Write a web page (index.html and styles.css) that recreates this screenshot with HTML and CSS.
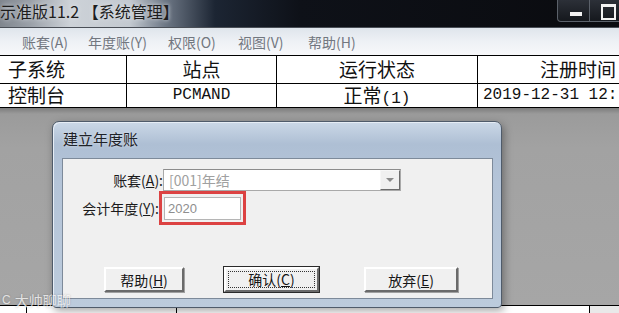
FILE: index.html
```html
<!DOCTYPE html>
<html lang="zh-CN">
  <head>
    <meta charset="UTF-8" />
    <title>系统管理 - 建立年度账</title>
    <link rel="stylesheet" href="styles.css">
  </head>
  <body>
    <!-- Main window title -->
    <div class="titlebar">
      <div class="title">示准版11.2 【系统管理】</div>
      <div class="winbtns">
        <span class="wb min"></span>
        <span class="wb max"></span>
      </div>
    </div>

    <!-- Menu -->
    <div class="menubar">
      <span class="m1">账套(A)</span>
      <span class="m2">年度账(Y)</span>
      <span class="m3">权限(O)</span>
      <span class="m4">视图(V)</span>
      <span class="m5">帮助(H)</span>
    </div>

    <!-- Site list -->
    <div class="grid">
      <div class="row head">
        <div class="cell c1">子系统</div>
        <div class="cell c2">站点</div>
        <div class="cell c3">运行状态</div>
        <div class="cell c4">注册时间</div>
      </div>
      <div class="row">
        <div class="cell c1">控制台</div>
        <div class="cell c2 mono">PCMAND</div>
        <div class="cell c3">正常<span class="mono">(1)</span></div>
        <div class="cell c4 mono left">2019-12-31 12:</div>
      </div>
    </div>

    <!-- Desktop area under the dialog -->
    <div class="desk">
      <div class="gap"></div>
      <div class="lastrow">
        <div class="lc a"></div>
        <div class="lc b"></div>
        <div class="lc c"></div>
        <div class="lc d"></div>
      </div>

      <!-- Dialog window -->
      <div class="dialog">
        <div class="dlg-title">建立年度账</div>
        <div class="dlg-body">
          <div class="field">
            <label>账套(<u>A</u>):</label>
            <div class="combo">
              <span class="combo-text">[001]年结</span>
              <span class="combo-btn"><i></i></span>
            </div>
          </div>
          <div class="field">
            <label class="narrow">会计年度(<u>Y</u>):</label>
            <div class="hl">
              <div class="input">2020</div>
            </div>
          </div>
          <div class="buttons">
            <button class="btn b1">帮助(<u>H</u>)</button>
            <button class="btn b2 default"><span class="focus">确认(<u>C</u>)</span></button>
            <button class="btn b3">放弃(<u>E</u>)</button>
          </div>
        </div>
      </div>

      <div class="watermark"><span class="wm-icon">C</span>大帅聊聊</div>
    </div>
  </body>
</html>
```

FILE: styles.css
```css
* {
  margin: 0;
  padding: 0;
  box-sizing: border-box;
}

body {
  width: 619px;
  height: 313px;
  overflow: hidden;
  font-family: "Noto Sans CJK SC", "Liberation Sans", sans-serif;
  background-color: #a3a3a3;
  color: #111;
}

/* Title bar */
.titlebar {
  height: 27px;
  display: flex;
  justify-content: space-between;
  background: linear-gradient(90deg, #80868e 0, #9aa0a8 30px, #cdd2d8 70px, #c3c9d0 130px, #6e7886 165px, #1c2533 215px, #0e1118 300px, #0a0b0f 100%);
}

.title {
  font-size: 16px;
  line-height: 23px;
  color: #1d1d1d;
  text-shadow: 0 0 4px #e8ebef;
  white-space: nowrap;
}

.winbtns {
  display: flex;
  align-self: flex-start;
  height: 22px;
  border: 1px solid #5b616a;
  border-top: none;
  border-radius: 0 0 0 4px;
  margin-right: -4px;
  background: linear-gradient(#2c3038, #15181d);
}

.wb {
  width: 32px;
  position: relative;
  border-right: 1px solid #5b616a;
}

.wb.min::after {
  content: "";
  position: absolute;
  left: 12px;
  top: 12px;
  width: 12px;
  height: 4px;
  background: #f2f2f2;
}

.wb.max::after {
  content: "";
  position: absolute;
  left: 11px;
  top: 4px;
  width: 11px;
  height: 11px;
  border: 2px solid #f2f2f2;
  border-top-width: 3px;
}

/* Menu bar */
.menubar {
  height: 28px;
  display: flex;
  align-items: center;
  padding-left: 22px;
  font-size: 14px;
  color: #72777f;
  background: linear-gradient(#dfe5ec, #eef1f5 50%, #f7f8fa);
  border-top: 1px solid #4a4f57;
}

.menubar span { display: block; }
.m1 { width: 66px; }
.m2 { width: 80px; }
.m3 { width: 70px; }
.m4 { width: 70px; }

/* Site table */
.grid {
  background: #fff;
  border-top: 1px solid #000;
  white-space: nowrap;
}

.row {
  display: flex;
  height: 24px;
  border-bottom: 1px solid #000;
}

.row.head { height: 28px; }

.cell {
  font-size: 19px;
  line-height: 22px;
  text-align: center;
  border-right: 1px solid #000;
  flex-shrink: 0;
}

.row.head .cell { line-height: 26px; }

.c1 { width: 127px; text-align: left; padding-left: 8px; }
.c2 { width: 150px; }
.c3 { width: 201px; }
.c4 { width: 200px; border-right: none; }
.left { text-align: left; padding-left: 5px; }

.mono {
  font-family: "Liberation Mono", monospace;
  font-size: 16px;
}

/* Grey area behind the dialog */
.desk {
  position: relative;
  height: 206px;
  display: flex;
  flex-direction: column;
}

.gap {
  flex: 1;
  background: linear-gradient(#7c7c7c, #9b9b9b 6px, #a2a2a2 40px, #a6a6a6);
}

.lastrow {
  height: 9px;
  display: flex;
  background: #fff;
  border-top: 1px solid #000;
}

.lc { border-right: 1px solid #000; }
.lc.a { width: 27px; }
.lc.b { width: 150px; }
.lc.c { width: 413px; }
.lc.d { flex: 1; border-right: none; background: #e9e9e9; }

/* Dialog */
.dialog {
  position: absolute;
  left: 52px;
  top: 13px;
  width: 450px;
  height: 187px;
  display: flex;
  flex-direction: column;
  border: 1px solid #4f5b6a;
  border-radius: 7px 7px 4px 4px;
  background: linear-gradient(#cbd8e7, #aebfd4 22px, #b4c4d8 60px, #bccbdc);
  box-shadow: 2px 3px 8px rgba(0, 0, 0, 0.35), inset 1px 1px 0 #e6edf5;
}

.dlg-title {
  height: 36px;
  padding: 7px 0 0 10px;
  font-size: 15px;
  line-height: 20px;
  color: #1e2228;
  text-shadow: 0 0 3px #dfe7f0;
}

.dlg-body {
  height: 141px;
  margin: 0 8px 0 9px;
  background: #f0f0f0;
  border: 1px solid #7d8a9a;
  padding-top: 10px;
  font-size: 14px;
}

.field {
  display: flex;
  align-items: center;
}

.field label {
  width: 100px;
  text-align: right;
  color: #1a1a1a;
  white-space: nowrap;
}

.field label.narrow { width: 96px; }

.combo {
  width: 238px;
  height: 22px;
  display: flex;
  background: #fff;
  border: 1px solid #a9a9a9;
  border-top-color: #8c8c8c;
}

.combo-text {
  flex: 1;
  padding-left: 5px;
  line-height: 20px;
  color: #a0a0a0;
  font-size: 14px;
}

.combo-btn {
  width: 20px;
  display: flex;
  align-items: center;
  justify-content: center;
  background: #f0f0f0;
  border: 1px solid #f7f7f7;
  border-right-color: #6b6b6b;
  border-bottom-color: #6b6b6b;
}

.combo-btn i {
  width: 0;
  height: 0;
  border-left: 4px solid transparent;
  border-right: 4px solid transparent;
  border-top: 4px solid #8a8a8a;
}

.hl {
  border: 3px solid #dc4242;
  padding: 3px 2px 2px 2px;
}

.input {
  width: 77px;
  height: 23px;
  background: #fff;
  border: 1px solid #b5b5b5;
  padding-left: 3px;
  line-height: 21px;
  font-size: 13px;
  font-family: "Liberation Sans", sans-serif;
  color: #8e8e8e;
}

/* Dialog buttons */
.buttons {
  display: flex;
  margin-top: 42px;
  padding-left: 41px;
}

.btn {
  height: 25px;
  font-family: "Noto Sans CJK SC", sans-serif;
  font-size: 14px;
  color: #151515;
  background: #f0f0f0;
  border: 2px solid;
  border-color: #ffffff #6a6a6a #6a6a6a #ffffff;
  box-shadow: 1px 1px 0 #a0a0a0;
}

.b1 { width: 80px; }
.b2 { width: 95px; margin-left: 40px; }
.b3 { width: 94px; margin-left: 45px; }

.btn.default {
  outline: 1px solid #2a2a2a;
  padding: 2px;
}

.focus {
  display: block;
  height: 100%;
  line-height: 15px;
  border: 1px dotted #333;
}

/* Watermark */
.watermark {
  position: absolute;
  left: 2px;
  top: 184px;
  font-size: 14px;
  line-height: 16px;
  color: rgba(255, 255, 255, 0.75);
  text-shadow: 0 0 2px rgba(0, 0, 0, 0.25);
  display: flex;
  align-items: center;
  gap: 4px;
}

.wm-icon {
  font-family: "Liberation Sans", sans-serif;
  font-size: 12px;
}
```
